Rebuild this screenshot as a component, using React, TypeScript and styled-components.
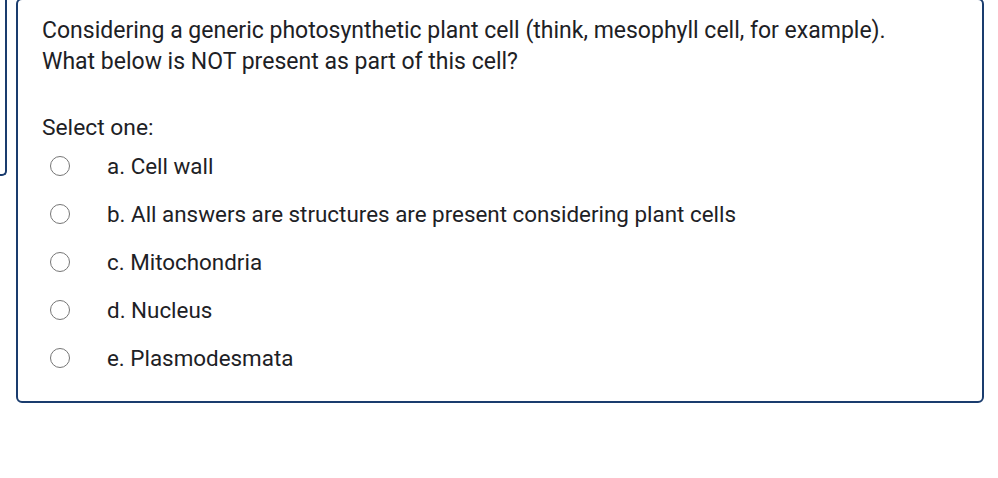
import styled, { createGlobalStyle } from "styled-components";

const options = [
  "a. Cell wall",
  "b. All answers are structures are present considering plant cells",
  "c. Mitochondria",
  "d. Nucleus",
  "e. Plasmodesmata",
];

const App = () => (
  <>
    <GlobalStyle />
    <Page>
      <PrevBox />
      <Card>
        <Question>
          Considering a generic photosynthetic plant cell (think, mesophyll cell, for example).
          <br />
          What below is NOT present as part of this cell?
        </Question>
        <Prompt>Select one:</Prompt>
        <Answers>
          {options.map((text) => (
            <Option key={text}>
              <Radio />
              <Label>{text}</Label>
            </Option>
          ))}
        </Answers>
      </Card>
    </Page>
  </>
);

export default App;

const GlobalStyle = createGlobalStyle`
  body {
    margin: 0;
    background: #ffffff;
    font-family: Roboto, "Liberation Sans", sans-serif;
    color: #1d2125;
  }
`;

const Page = styled.div`
  display: flex;
  align-items: flex-start;
  gap: 9px;
  width: 998px;
  height: 478px;
  overflow: hidden;
`;

const PrevBox = styled.div`
  flex: none;
  width: 5px;
  height: 184px;
  margin-top: -10px;
  border-right: 2px solid #1a3c6e;
  border-bottom: 2px solid #1a3c6e;
  border-bottom-right-radius: 5px;
`;

const Card = styled.div`
  flex: none;
  box-sizing: border-box;
  width: 968px;
  margin-top: -2px;
  padding: 15px 23px 19px 24px;
  border: 2px solid #1a3c6e;
  border-radius: 6px;
`;

const Question = styled.p`
  margin: 0;
  font-size: 23px;
  line-height: 31px;
`;

const Prompt = styled.div`
  margin-top: 39px;
  font-size: 22.8px;
  line-height: 24px;
`;

const Answers = styled.div`
  display: flex;
  flex-direction: column;
  margin-top: 2px;
`;

const Option = styled.div`
  display: flex;
  align-items: center;
  height: 48px;
  padding-left: 8px;
`;

const Radio = styled.span`
  flex: none;
  width: 18px;
  height: 18px;
  border: 1.5px solid #767676;
  border-radius: 50%;
`;

const Label = styled.span`
  margin-left: 37px;
  font-size: 22.4px;
  line-height: 24px;
`;
